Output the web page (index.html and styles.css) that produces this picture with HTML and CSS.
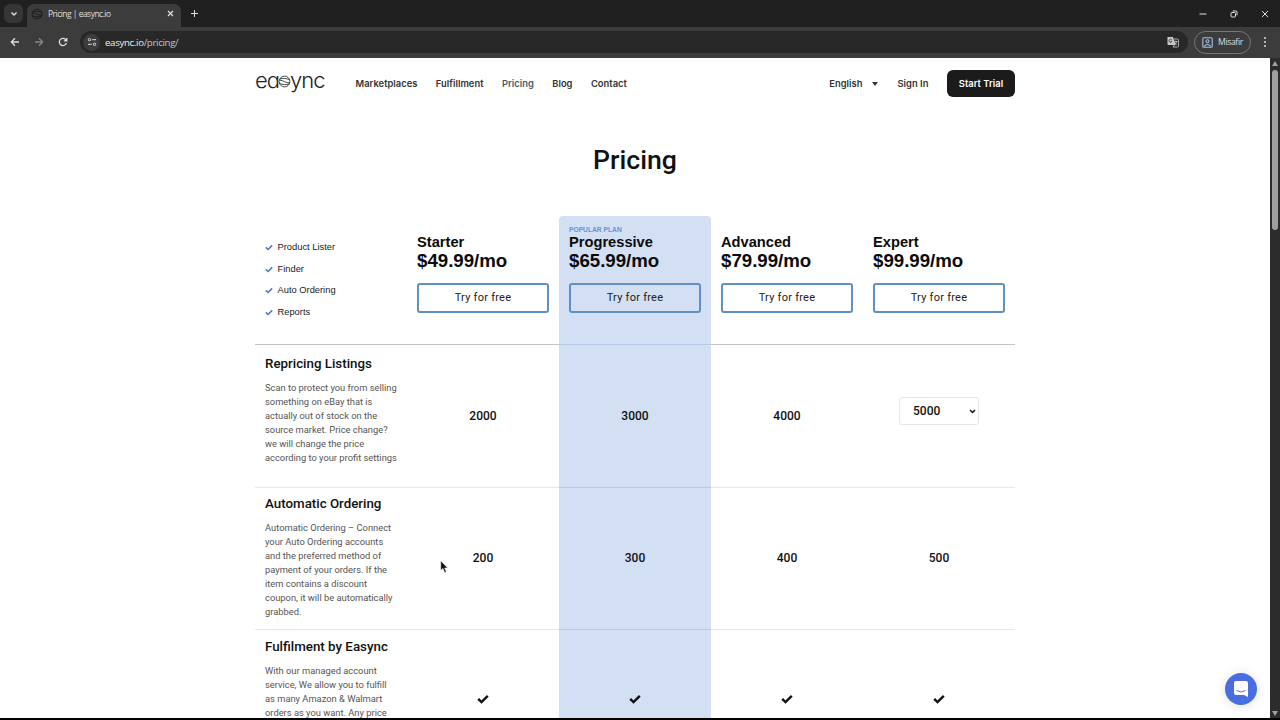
FILE: index.html
```html
<!DOCTYPE html>
<html lang="en">
  <head>
    <meta charset="utf-8">
    <title>Pricing | easync.io</title>
    <link rel="stylesheet" href="styles.css">
  </head>
  <body>
    <svg class="defs" width="0" height="0">
      <symbol id="check" viewBox="0 0 12 10"><path d="M1.200 4.800 4.500 8 10.800 1.800"/></symbol>
      <symbol id="ball" viewBox="0 0 14 14"><circle cx="7" cy="7" r="5.800"/><path d="M2 4.500C5 3 8 3.500 12.500 5M1.500 9C5 10.500 9 11 12 9.500M2 5.500C6 6 8 8.500 12.500 8.500"/></symbol>
    </svg>

    <div class="tabstrip">
      <div class="tab-search"><svg width="8" height="6" viewBox="0 0 8 6"><path d="M1.500 1.500 4 4 6.500 1.500"/></svg></div>
      <div class="tab">
        <svg class="favicon" width="12" height="12"><use href="#ball"/></svg>
        <span class="tab-title">Pricing | easync.io</span>
        <svg class="tab-close" width="7" height="7" viewBox="0 0 7 7"><path d="M1 1 6 6M6 1 1 6"/></svg>
      </div>
      <svg class="new-tab" width="9" height="9" viewBox="0 0 9 9"><path d="M4.500 1V8M1 4.500H8"/></svg>
      <div class="window-buttons">
        <svg width="8" height="8" viewBox="0 0 8 8"><path d="M.5 4H7.500"/></svg>
        <svg width="8" height="8" viewBox="0 0 8 8"><rect x="1" y="2.500" width="4.500" height="4.500" rx="1"/><path d="M2.700 1H6Q7 1 7 2V5.300"/></svg>
        <svg width="8" height="8" viewBox="0 0 8 8"><path d="M1 1 7 7M7 1 1 7"/></svg>
      </div>
    </div>

    <div class="toolbar">
      <svg class="nav-icon" width="10" height="10" viewBox="0 0 10 10"><path d="M9 5H1.500M5 1.300 1.300 5 5 8.700"/></svg>
      <svg class="nav-icon off" width="10" height="10" viewBox="0 0 10 10"><path d="M1 5H8.500M5 1.300 8.700 5 5 8.700"/></svg>
      <svg class="nav-icon" width="10" height="10" viewBox="0 0 10 10"><path d="M8.400 6A3.600 3.600 0 1 1 7.700 2.600L8.800 3.800M8.800 1V3.900H5.900"/></svg>
      <div class="omnibox">
        <div class="site-info"><svg width="10" height="10" viewBox="0 0 10 10"><circle cx="2.500" cy="2.700" r="1.200"/><path d="M5.300 2.700H9M1 7.300H4.700"/><circle cx="7.500" cy="7.300" r="1.200"/></svg></div>
        <span class="url">easync.io<span>/pricing/</span></span>
        <svg class="translate" width="12" height="12" viewBox="0 0 12 12">
          <path class="sheet" d="M.5 1H6L8.500 9H1.500Q.5 9 .5 8Z"/>
          <path class="g" d="M4.800 3.800A1.600 1.600 0 1 0 5 5.300H3.600"/>
          <path class="line" d="M7 3H10.500Q11.500 3 11.500 4V10Q11.500 11 10.500 11H6L7.500 9M7 5.500H10.500M8.700 4.700V5.500M9.800 5.500Q9.300 7.500 7.700 8.500M7.500 6.200Q8.500 8 10 8.700"/>
        </svg>
      </div>
      <div class="profile">
        <svg width="11" height="11" viewBox="0 0 11 11"><rect x=".8" y=".8" width="9.400" height="9.400" rx="1"/><circle cx="5.500" cy="4.300" r="1.500"/><path d="M2 9.500Q5.500 5.500 9 9.500"/></svg>
        <span>Misafir</span>
      </div>
      <div class="kebab"><i></i><i></i><i></i></div>
    </div>

    <div class="viewport">
      <div class="page">
        <header class="header">
          <div class="logo"><span>ea</span><svg width="13" height="13"><use href="#ball"/></svg><span>ync</span></div>
          <nav class="nav">
            <a>Marketplaces</a>
            <a>Fulfillment</a>
            <a class="active">Pricing</a>
            <a>Blog</a>
            <a>Contact</a>
          </nav>
          <div class="account">
            <span class="lang">English</span><i class="caret"></i>
            <span class="signin">Sign In</span>
            <a class="trial">Start Trial</a>
          </div>
        </header>

        <h1>Pricing</h1>

        <div class="plans">
          <div class="row head">
            <ul class="cell features">
              <li><svg width="8" height="7"><use href="#check"/></svg>Product Lister</li>
              <li><svg width="8" height="7"><use href="#check"/></svg>Finder</li>
              <li><svg width="8" height="7"><use href="#check"/></svg>Auto Ordering</li>
              <li><svg width="8" height="7"><use href="#check"/></svg>Reports</li>
            </ul>
            <div class="cell plan">
              <h2>Starter</h2>
              <p class="price">$49.99/mo</p>
              <a class="try">Try for free</a>
            </div>
            <div class="cell plan popular">
              <span class="tag">POPULAR PLAN</span>
              <h2>Progressive</h2>
              <p class="price">$65.99/mo</p>
              <a class="try">Try for free</a>
            </div>
            <div class="cell plan">
              <h2>Advanced</h2>
              <p class="price">$79.99/mo</p>
              <a class="try">Try for free</a>
            </div>
            <div class="cell plan">
              <h2>Expert</h2>
              <p class="price">$99.99/mo</p>
              <a class="try">Try for free</a>
            </div>
          </div>

          <div class="row">
            <div class="cell info">
              <h3>Repricing Listings</h3>
              <p>Scan to protect you from selling<br>something on eBay that is<br>actually out of stock on the<br>source market. Price change?<br>we will change the price<br>according to your profit settings</p>
            </div>
            <div class="cell value">2000</div>
            <div class="cell value popular">3000</div>
            <div class="cell value">4000</div>
            <div class="cell value">
              <div class="select">5000<svg width="7" height="5" viewBox="0 0 7 5"><path d="M1 1 3.500 3.500 6 1"/></svg></div>
            </div>
          </div>

          <div class="row">
            <div class="cell info">
              <h3>Automatic Ordering</h3>
              <p>Automatic Ordering – Connect<br>your Auto Ordering accounts<br>and the preferred method of<br>payment of your orders. If the<br>item contains a discount<br>coupon, it will be automatically<br>grabbed.</p>
            </div>
            <div class="cell value">200</div>
            <div class="cell value popular">300</div>
            <div class="cell value">400</div>
            <div class="cell value">500</div>
          </div>

          <div class="row last">
            <div class="cell info">
              <h3>Fulfilment by Easync</h3>
              <p>With our managed account<br>service, We allow you to fulfill<br>as many Amazon &amp; Walmart<br>orders as you want. Any price</p>
            </div>
            <div class="cell value"><svg width="12" height="10"><use href="#check"/></svg></div>
            <div class="cell value popular"><svg width="12" height="10"><use href="#check"/></svg></div>
            <div class="cell value"><svg width="12" height="10"><use href="#check"/></svg></div>
            <div class="cell value"><svg width="12" height="10"><use href="#check"/></svg></div>
          </div>
        </div>
      </div>

      <div class="scrollbar">
        <i class="up"></i>
        <div class="thumb"></div>
        <i class="down"></i>
      </div>

      <div class="chat">
        <svg width="16" height="18" viewBox="0 0 16 18"><path class="bubble" d="M3 1H13Q15 1 15 3V17L11 15H3Q1 15 1 13V3Q1 1 3 1Z"/><path class="smile" d="M3.500 10.500Q8 13.500 12.500 10.500"/></svg>
      </div>
      <svg class="cursor" width="9" height="14" viewBox="0 0 9 14"><path d="M.7.7V10.500L2.900 8.500 4.700 12.700 6.400 12 4.700 8H7.700Z"/></svg>
    </div>
  </body>
</html>
```

FILE: styles.css
```css
* {
  box-sizing: border-box;
}
body {
  margin: 0;
  width: 1280px;
  height: 720px;
  overflow: hidden;
  display: flex;
  flex-direction: column;
  background: #000;
  font-family: Roboto, sans-serif;
}
h1, h2, h3, p, ul {
  margin: 0;
  padding: 0;
}
svg {
  fill: none;
  stroke: currentColor;
  flex: none;
}
.defs {
  position: absolute;
}

/* browser chrome */
.tabstrip {
  height: 27px;
  flex: none;
  display: flex;
  align-items: flex-end;
  background: #202020;
  color: #dedede;
}
.tab-search {
  width: 19px;
  height: 19px;
  margin: 0 4px 4px;
  border-radius: 6px;
  background: #363636;
  display: flex;
  align-items: center;
  justify-content: center;
}
.tab-search svg {
  stroke-width: 1.4;
}
.tab {
  width: 154px;
  height: 23px;
  border-radius: 7px 7px 0 0;
  background: #3c3c3c;
  display: flex;
  align-items: center;
  padding: 0 7px 4px 4px;
}
.favicon {
  color: #171717;
  stroke-width: 1;
}
.tab-title {
  font: 8.5px "Open Sans", sans-serif;
  letter-spacing: -.52px;
  margin-left: 5px;
  white-space: nowrap;
}
.tab-close {
  margin-left: auto;
  stroke-width: 1.2;
}
.new-tab {
  margin: 0 0 9px 9px;
}
.window-buttons {
  display: flex;
  gap: 23px;
  margin: 0 11px 9px auto;
}
.toolbar {
  height: 31px;
  flex: none;
  display: flex;
  align-items: center;
  background: #3c3c3c;
  color: #dedede;
  padding: 0 0 1px 10px;
}
.nav-icon {
  margin-right: 14px;
  stroke-width: 1.3;
}
.nav-icon.off {
  color: #858585;
}
.omnibox {
  width: 1108px;
  height: 22px;
  margin-left: -2px;
  border-radius: 11px;
  background: #282828;
  display: flex;
  align-items: center;
  padding: 0 9px 0 3px;
}
.site-info {
  width: 17px;
  height: 17px;
  border-radius: 50%;
  background: #3c3c3c;
  display: flex;
  align-items: center;
  justify-content: center;
}
.url {
  margin-left: 5px;
  font: 9.700px "Open Sans", sans-serif;
  letter-spacing: -.34px;
  color: #ececec;
}
.url span {
  color: #c4c4c4;
}
.translate {
  margin-left: auto;
}
.translate .sheet {
  fill: #c8c8c8;
  stroke: none;
}
.translate .g {
  stroke: #333;
  stroke-width: .8;
}
.translate .line {
  stroke-width: .7;
}
.profile {
  width: 57px;
  height: 23px;
  margin-left: 6px;
  border: 1px solid #777;
  border-radius: 12px;
  display: flex;
  align-items: center;
  padding-left: 7px;
  gap: 5px;
  font: 8.700px "Open Sans", sans-serif;
  letter-spacing: -.4px;
}
.profile svg {
  color: #a5bfe0;
  stroke-width: 1.1;
}
.kebab {
  margin-left: 13px;
  display: flex;
  flex-direction: column;
  gap: 2px;
}
.kebab i {
  width: 2px;
  height: 2px;
  border-radius: 50%;
  background: #d8d8d8;
}

.viewport {
  position: relative;
  display: flex;
  height: 660px;
  flex: none;
  overflow: hidden;
}
.page {
  width: 1270px;
  background: #fff;
}
.scrollbar {
  width: 10px;
  background: #2c2c2c;
  display: flex;
  flex-direction: column;
  align-items: center;
}
.thumb {
  width: 6px;
  height: 160px;
  margin-top: 4px;
  border-radius: 3px;
  background: #9f9f9f;
}
.up, .down {
  border: 3px solid transparent;
}
.up {
  margin-top: 3px;
  border-top: 0;
  border-bottom: 5px solid #9f9f9f;
}
.down {
  margin: auto 0 2px;
  border-bottom: 0;
  border-top: 5px solid #9f9f9f;
}

/* site header */
.header {
  width: 760px;
  height: 51px;
  margin: 0 auto;
  display: flex;
  align-items: center;
  font: 600 9.330px Inter, sans-serif;
  letter-spacing: .04px;
  color: #333;
}
.logo {
  width: 69px;
  height: 30px;
  margin-top: -8px;
  display: flex;
  align-items: center;
  color: #222;
  font: 300 22px/30px Inter, sans-serif;
  font-feature-settings: "cv11";
  letter-spacing: -1px;
}
.logo svg {
  margin: 4px -1px 0 -1px;
  stroke-width: .9;
}
.nav {
  display: flex;
  gap: 18.400px;
  margin-left: 31.500px;
}
.nav .active {
  color: #4b5966;
}
.account {
  margin-left: auto;
  display: flex;
  align-items: center;
}
.caret {
  margin: 0 20px 0 9px;
  border: 3px solid transparent;
  border-top: 4px solid #333;
  border-bottom: 0;
}
.trial {
  width: 68px;
  height: 27px;
  margin-left: 18.500px;
  border-radius: 6px;
  background: #1b1b1b;
  color: #fff;
  line-height: 27px;
  text-align: center;
}
h1 {
  height: 107px;
  padding-top: 35px;
  text-align: center;
  font-size: 26.670px;
  font-weight: 500;
  line-height: 32px;
  color: #111;
}

/* pricing table */
.plans {
  width: 760px;
  margin: 0 auto;
}
.row {
  height: 142.500px;
  display: grid;
  grid-template-columns: repeat(5, 152px);
  border-bottom: 1px solid #e5e8ea;
}
.head {
  height: 129px;
  border-color: #c0c7cb;
}
.last {
  height: 138px;
}
.cell {
  padding: 0 10px;
}
/* tint runs under the row border */
.popular {
  background: #d3dff2;
  margin-bottom: -1px;
  border-bottom: 1px solid #b6cae5;
}
.last .popular {
  margin-bottom: 0;
  border: 0;
}
.head .popular {
  border-radius: 4px 4px 0 0;
}
.features {
  list-style: none;
  padding-top: 21px;
  font: 9.330px/21.600px "Liberation Sans", sans-serif;
  color: #222;
}
.features li {
  display: flex;
  align-items: center;
}
.features svg {
  color: #4a7cc4;
  stroke-width: 2.400;
  margin-right: 4.500px;
}
.plan {
  padding-top: 17px;
  font-family: "Liberation Sans", sans-serif;
  color: #0b0b0b;
}
.plan.popular {
  padding-top: 9px;
}
.tag {
  display: block;
  height: 8px;
  font-size: 6.700px;
  font-weight: bold;
  line-height: 9px;
  color: #6a90da;
}
.plan h2 {
  font-size: 14.670px;
  line-height: 18px;
}
.price {
  font-size: 18.670px;
  font-weight: bold;
  line-height: 19px;
}
.try {
  display: block;
  height: 30px;
  margin-top: 13px;
  border: 2px solid #608fc5;
  border-radius: 3px;
  font: 11px/26px Roboto, sans-serif;
  letter-spacing: .25px;
  text-align: center;
  color: #222;
}
.info h3 {
  padding-top: 6.500px;
  font-size: 13.330px;
  font-weight: 500;
  line-height: 20px;
  color: #111;
  white-space: nowrap;
}
.head + .row h3 {
  padding-top: 9px;
}
.info p {
  margin-top: 7px;
  font-size: 9.330px;
  line-height: 14px;
  color: #555;
  white-space: nowrap;
}
.value {
  display: flex;
  align-items: center;
  justify-content: center;
  font-size: 12px;
  font-weight: 500;
  color: #111;
}
.value > svg {
  stroke-width: 2.400;
}
.select {
  width: 80px;
  height: 28px;
  margin-bottom: 9px;
  border: 1px solid #e6e6e6;
  border-radius: 3px;
  display: flex;
  align-items: center;
  justify-content: space-between;
  padding: 0 2px 0 13px;
}
.select svg {
  stroke-width: 1.500;
}

.chat {
  position: absolute;
  left: 1225px;
  top: 615px;
  width: 32px;
  height: 32px;
  border-radius: 50%;
  background: #4a6ee0;
  box-shadow: 0 1px 12px rgba(0, 0, 0, .12);
  display: flex;
  align-items: center;
  justify-content: center;
}
.bubble {
  fill: #fff;
  stroke: none;
}
.smile {
  stroke: #4a6ee0;
}
.cursor {
  position: absolute;
  left: 440px;
  top: 502px;
}
.cursor path {
  fill: #111;
  stroke: #fff;
  stroke-width: .6;
}
```
